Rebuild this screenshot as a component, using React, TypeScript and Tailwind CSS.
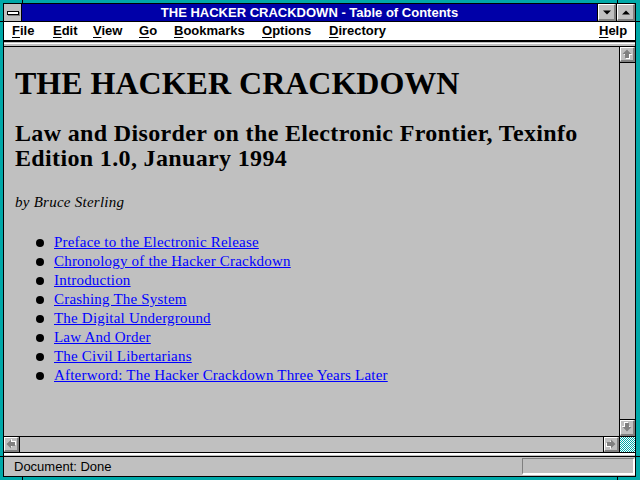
import React from "react";

const ui = { fontFamily: '"Liberation Sans", Arial, sans-serif' };
const serif = { fontFamily: '"Liberation Serif", "Times New Roman", serif' };

function Arrow({ dir }: { dir: "up" | "down" | "left" | "right" }) {
  const rot = { up: 0, right: 90, down: 180, left: 270 }[dir];
  const pts = "5,0.5 9.5,5 7,5 7,9 3,9 3,5 0.5,5";
  return (
    <svg width="11" height="11" viewBox="0 0 11 11" className="block">
      <g transform={`rotate(${rot} 5 5)`}>
        <polygon points={pts} fill="#ffffff" transform="translate(1 1)" />
        <polygon points={pts} fill="#808080" />
      </g>
    </svg>
  );
}

function ScrollBtn({ dir }: { dir: "up" | "down" | "left" | "right" }) {
  return (
    <div className="w-full h-full bg-[#c0c0c0] border-t border-l border-white border-r-2 border-b-2 border-r-[#808080] border-b-[#808080] flex items-center justify-center">
      <Arrow dir={dir} />
    </div>
  );
}

function TitleBtn({ up }: { up?: boolean }) {
  return (
    <div className="w-[19px] h-full border-l border-black">
      <div className="w-full h-full bg-[#c0c0c0] border-t border-l border-white border-r-2 border-b-2 border-r-[#808080] border-b-[#808080] flex items-center justify-center">
        <svg width="8" height="5" viewBox="0 0 8 5" className="block">
          {up ? (
            <polygon points="0,4.5 4,0.5 8,4.5" fill="#000" />
          ) : (
            <polygon points="0,0.5 8,0.5 4,4.5" fill="#000" />
          )}
        </svg>
      </div>
    </div>
  );
}

function MenuItem({ k, rest, w }: { k: string; rest: string; w: string }) {
  return (
    <div className={w}>
      <span className="underline underline-offset-2">{k}</span>
      {rest}
    </div>
  );
}

const links = [
  "Preface to the Electronic Release",
  "Chronology of the Hacker Crackdown",
  "Introduction",
  "Crashing The System",
  "The Digital Underground",
  "Law And Order",
  "The Civil Libertarians",
  "Afterword: The Hacker Crackdown Three Years Later",
];

export default function App() {
  return (
    <div className="relative w-[640px] h-[480px] bg-[#00a8a8] pl-[3px] pr-[4px] pt-[3px] pb-[3px] overflow-hidden">
      <div className="w-full h-full border border-black flex flex-col bg-[#c0c0c0]">
        {/* Title bar */}
        <div className="flex h-[18px] border-b border-black bg-[#0000a8] shrink-0">
          <div className="w-[18px] h-full border-r border-black bg-[#c0c0c0] flex items-center justify-center">
            <div className="relative w-[12px] h-[4px]">
              <div className="absolute left-[1px] top-[1px] w-[12px] h-[4px] bg-[#808080]" />
              <div className="absolute left-0 top-0 w-[12px] h-[4px] bg-white border border-black" />
            </div>
          </div>
          <div
            className="flex-1 text-center text-white font-bold text-[13px] leading-[17px]"
            style={ui}
          >
            THE HACKER CRACKDOWN - Table of Contents
          </div>
          <TitleBtn />
          <TitleBtn up />
        </div>

        {/* Menu bar */}
        <div
          className="flex h-[20px] bg-white border-b-2 border-black pl-[8px] text-[13px] font-bold leading-[18px] text-black shrink-0"
          style={ui}
        >
          <MenuItem k="F" rest="ile" w="w-[41px]" />
          <MenuItem k="E" rest="dit" w="w-[40px]" />
          <MenuItem k="V" rest="iew" w="w-[46px]" />
          <MenuItem k="G" rest="o" w="w-[35px]" />
          <MenuItem k="B" rest="ookmarks" w="w-[88px]" />
          <MenuItem k="O" rest="ptions" w="w-[67px]" />
          <MenuItem k="D" rest="irectory" w="w-[60px]" />
          <div className="flex-1" />
          <MenuItem k="H" rest="elp" w="w-[36px]" />
        </div>

        {/* collapsed toolbar strip */}
        <div className="h-[5px] bg-[#c0c0c0] border-b border-black shrink-0">
          <div className="h-px mt-px bg-white" />
        </div>

        {/* Main */}
        <div className="flex flex-1 min-h-0">
          <div className="flex-1 min-w-0 bg-[#c0c0c0] pl-[11px] pt-[20px] overflow-hidden text-black" style={serif}>
            <h1 className="text-[32px] leading-[32px] font-bold whitespace-nowrap">THE HACKER CRACKDOWN</h1>
            <h2 className="mt-[22px] text-[24px] leading-[25px] font-bold tracking-[0.35px] whitespace-nowrap">
              Law and Disorder on the Electronic Frontier, Texinfo
              <br />
              Edition 1.0, January 1994
            </h2>
            <p className="mt-[22px] text-[15px] leading-[18px] italic tracking-[0.25px]">by Bruce Sterling</p>
            <ul className="mt-[22px]">
              {links.map((l) => (
                <li key={l} className="flex items-start text-[15px] leading-[19px]">
                  <span className="ml-[21px] mr-[10px] mt-[6px] w-[8px] h-[8px] rounded-full bg-black shrink-0" />
                  <a className="text-[#0000ff] underline whitespace-nowrap tracking-[0.2px]">{l}</a>
                </li>
              ))}
            </ul>
          </div>
          <div className="w-[16px] border-l border-black flex flex-col shrink-0">
            <div className="h-[16px] border-b border-black">
              <ScrollBtn dir="up" />
            </div>
            <div className="flex-1 bg-[#c0c0c0]" />
            <div className="h-[17px] border-t border-black">
              <ScrollBtn dir="down" />
            </div>
          </div>
        </div>

        {/* Horizontal scrollbar */}
        <div className="flex h-[17px] border-t border-b border-black shrink-0">
          <div className="w-[16px] border-r border-black">
            <ScrollBtn dir="left" />
          </div>
          <div className="flex-1 bg-[#c0c0c0]" />
          <div className="w-[16px] border-l border-black">
            <ScrollBtn dir="right" />
          </div>
          <div className="w-[16px] border-l border-black bg-[repeating-conic-gradient(#00a8a8_0_25%,#ffffff_0_50%)] bg-[length:2px_2px]" />
        </div>

        {/* separator */}
        <div className="h-[4px] border-b border-black shrink-0">
          <div className="h-[2px] bg-white" />
        </div>

        {/* Status bar */}
        <div className="flex h-[19px] bg-[#c0c0c0] shrink-0">
          <div className="flex-1 pl-[10px] text-[13px] leading-[19px] text-black" style={ui}>
            Document: Done
          </div>
          <div className="mt-[1px] h-[17px] w-[113px] border-t border-l border-[#808080] border-b-2 border-r-2 border-b-white border-r-white" />
        </div>
      </div>

      {/* frame corner markers */}
      <div className="absolute left-[22px] top-0 w-px h-[4px] bg-black" />
      <div className="absolute left-[617px] top-0 w-px h-[4px] bg-black" />
      <div className="absolute left-[22px] bottom-0 w-px h-[4px] bg-black" />
      <div className="absolute left-[617px] bottom-0 w-px h-[4px] bg-black" />
      <div className="absolute left-0 top-[21px] w-[4px] h-px bg-black" />
      <div className="absolute left-0 top-[456px] w-[4px] h-px bg-black" />
      <div className="absolute right-0 top-[21px] w-[5px] h-px bg-black" />
      <div className="absolute right-0 top-[456px] w-[5px] h-px bg-black" />
    </div>
  );
}
